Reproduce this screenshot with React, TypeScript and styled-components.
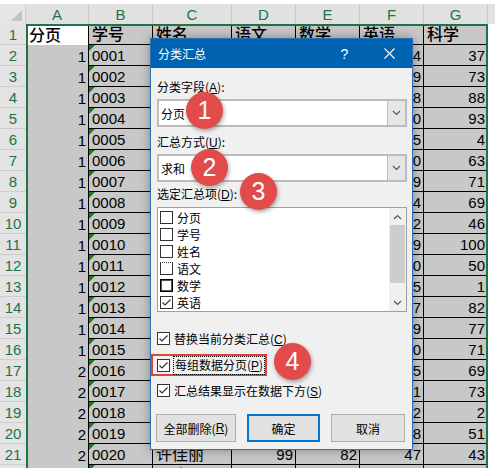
import React from 'react';
import styled, { createGlobalStyle } from 'styled-components';

const GlobalStyle = createGlobalStyle`
    html, body {
        margin: 0;
        padding: 0;
        background: #fff;
    }
    body {
        width: 495px;
        height: 468px;
        overflow: hidden;
        font-family: "Liberation Sans", "Noto Sans CJK SC", sans-serif;
    }
`;

const Page = styled.div`
    position: relative;
    width: 495px;
    height: 468px;
    padding-top: 4px;
    box-sizing: border-box;
    overflow: hidden;
    background: #fff;
`;

const Sheet = styled.div`
    position: relative;
    display: grid;
    grid-template-columns: 26px 63px 64px 79px 64px 64px 64px 64px 1fr;
    grid-template-rows: 20px repeat(22, 21px);
`;

const Corner = styled.div`
    position: relative;
    background: #e6e6e6;
    border-right: 1px solid #cfcfcf;

    &::after {
        content: '';
        position: absolute;
        right: 3px;
        bottom: 3px;
        border-left: 11px solid transparent;
        border-bottom: 11px solid #c4c4c4;
    }
`;

const ColHead = styled.div`
    display: flex;
    align-items: center;
    justify-content: center;
    background: #e1e1e1;
    border-right: 1px solid #c9c9c9;
    box-sizing: border-box;
    color: #217346;
    font-size: 15px;
`;

const RowHead = styled.div`
    display: flex;
    align-items: flex-end;
    justify-content: center;
    padding-bottom: 1px;
    background: #e3e3e3;
    border-bottom: 1px solid #cdcdcd;
    box-sizing: border-box;
    color: #217346;
    font-size: 15px;
`;

const Cell = styled.div<{ $white?: boolean; $lined?: boolean; $right?: boolean; $flag?: boolean; $cjk?: boolean; $head?: boolean }>`
    position: relative;
    display: flex;
    align-items: flex-end;
    justify-content: ${p => (p.$right ? 'flex-end' : 'flex-start')};
    padding: 0 2px 1px 3px;
    box-sizing: border-box;
    overflow: hidden;
    white-space: nowrap;
    background: ${p => (p.$white ? '#fff' : '#c8c8c8')};
    border-right: 1px solid #000;
    border-bottom: ${p => (p.$lined ? '1px solid #000' : 'none')};
    color: #000;
    font-family: ${p => (p.$cjk ? '"Noto Sans CJK SC", sans-serif' : '"Liberation Sans", sans-serif')};
    font-size: ${p => (p.$cjk ? '16px' : '15px')};
    font-weight: ${p => (p.$head ? 500 : 400)};
    line-height: ${p => (p.$cjk ? '20px' : '17px')};

    &::before {
        content: '';
        display: ${p => (p.$flag ? 'block' : 'none')};
        position: absolute;
        left: 0;
        top: 0;
        border-top: 6px solid #1b7a1b;
        border-right: 6px solid transparent;
    }
`;

const Filler = styled.div<{ $head?: boolean }>`
    background: ${p => (p.$head ? '#e1e1e1' : '#fff')};
`;

/* selection outline drawn over the selected cells */
const Selection = styled.div`
    position: absolute;
    left: 26px;
    top: 20px;
    width: 462px;
    bottom: 0;
    box-sizing: border-box;
    border: 2px solid #217346;
    border-bottom: none;
    pointer-events: none;
`;

const Dialog = styled.div`
    position: absolute;
    left: 150px;
    top: 38px;
    width: 263px;
    box-sizing: border-box;
    background: #f0f0f0;
    border: 1px solid #2a70b6;
    box-shadow: 0 0 10px rgba(0, 0, 0, 0.35);
    font-family: "Noto Sans CJK SC", "Liberation Sans", sans-serif;
    font-size: 12px;
    color: #000;
`;

const TitleBar = styled.div`
    display: flex;
    align-items: center;
    height: 29px;
    padding-left: 7px;
    background: #0063b1;
    color: #fff;
`;

const TitleText = styled.span`
    flex: 1;
    font-size: 12px;
`;

const TitleButton = styled.div`
    display: flex;
    align-items: center;
    justify-content: center;
    width: 45px;
    height: 29px;
    color: #fff;
    font-family: "Liberation Sans", sans-serif;
    font-size: 14px;
`;

const Body = styled.div`
    display: flex;
    flex-direction: column;
    padding: 11px 5px 7px 6px;
`;

const Label = styled.div<{ $gap?: number }>`
    height: 16px;
    line-height: 16px;
    margin-top: ${p => p.$gap ?? 0}px;
    margin-bottom: 4px;
`;

const Key = styled.span`
    text-decoration: underline;
    font-family: "Liberation Sans", sans-serif;
`;

const Select = styled.div`
    display: flex;
    height: 28px;
    box-sizing: border-box;
    background: #fff;
    border: 2px solid #bcbcbc;
`;

const SelectValue = styled.div`
    flex: 1;
    display: flex;
    align-items: center;
    padding-left: 2px;
`;

const SelectArrow = styled.div`
    display: flex;
    align-items: center;
    justify-content: center;
    width: 17px;
    background: #e6e6e6;
    border-left: 1px solid #bcbcbc;
`;

const List = styled.div`
    display: flex;
    height: 105px;
    margin-top: 1px;
    box-sizing: border-box;
    background: #fff;
    border: 1px solid #a0a0a0;
`;

const Items = styled.div`
    flex: 1;
    display: flex;
    flex-direction: column;
    padding: 1px 0 0 2px;
`;

const Item = styled.div`
    display: flex;
    align-items: center;
    gap: 4px;
    height: 17px;
    line-height: 17px;
`;

const Box = styled.span<{ $focus?: boolean; $strong?: boolean }>`
    display: inline-flex;
    align-items: center;
    justify-content: center;
    width: 13px;
    height: 13px;
    box-sizing: border-box;
    background: #fff;
    border: 1px solid ${p => (p.$strong ? '#000' : '#333')};
    box-shadow: ${p => (p.$strong ? 'inset 0 0 0 1px #555' : 'none')};
    border-top-style: ${p => (p.$focus ? 'dotted' : 'solid')};
    flex-shrink: 0;
`;

const Scrollbar = styled.div`
    display: flex;
    flex-direction: column;
    align-items: center;
    width: 17px;
    background: #f0f0f0;
`;

const ScrollArrow = styled.div`
    display: flex;
    align-items: center;
    justify-content: center;
    height: 17px;
    width: 17px;
`;

const Thumb = styled.div`
    width: 15px;
    height: 58px;
    background: #cdcdcd;
`;

const ScrollTrack = styled.div`
    flex: 1;
`;

const Options = styled.div`
    display: flex;
    flex-direction: column;
    gap: 6px;
    margin-top: 16px;
`;

const Option = styled.div<{ $marked?: boolean }>`
    display: flex;
    align-items: center;
    gap: 4px;
    height: ${p => (p.$marked ? '22px' : '20px')};
    box-sizing: border-box;
    align-self: flex-start;
    ${p =>
        p.$marked
            ? `
        margin: 0 0 -2px -6px;
        padding: 0 1px 0 4px;
        border: 2px solid #e0423a;
    `
            : ''}
`;

const Focus = styled.span`
    padding: 0 1px;
    line-height: 16px;
    outline: 1px dotted #000;
`;

const Buttons = styled.div`
    display: flex;
    gap: 11px;
    margin: 14px 0 0 -1px;
`;

const Button = styled.div<{ $w: number; $primary?: boolean }>`
    display: flex;
    align-items: center;
    justify-content: center;
    width: ${p => p.$w}px;
    height: 28px;
    box-sizing: border-box;
    background: #e1e1e1;
    border: ${p => (p.$primary ? '2px solid #0078d7' : '1px solid #adadad')};
`;

const Badge = styled.div<{ $x: number; $y: number }>`
    position: absolute;
    left: ${p => p.$x}px;
    top: ${p => p.$y}px;
    display: flex;
    align-items: center;
    justify-content: center;
    width: 37px;
    height: 37px;
    border-radius: 50%;
    background: #e34a4a;
    box-shadow: 1px 2px 4px rgba(0, 0, 0, 0.35);
    color: #fff;
    font-family: "Liberation Sans", sans-serif;
    font-size: 25px;
`;

const Chevron = ({ up }: { up?: boolean }) => (
    <svg width="9" height="6" viewBox="0 0 9 6">
        <polyline
            points={up ? '1,5 4.5,1.5 8,5' : '1,1 4.5,4.5 8,1'}
            fill="none"
            stroke="#555"
            strokeWidth="1.2"
        />
    </svg>
);

const Check = () => (
    <svg width="11" height="11" viewBox="0 0 11 11">
        <polyline points="1.5,5.5 4,8 9.5,2.5" fill="none" stroke="#333" strokeWidth="1.2" />
    </svg>
);

const columns = ['A', 'B', 'C', 'D', 'E', 'F', 'G'];
const heads = ['学号', '姓名', '语文', '数学', '英语', '科学'];
const names = [
    '王子涵', '李明', '张欣怡', '刘洋', '陈晨', '杨帆', '赵磊', '黄婷', '周杰', '吴静',
    '徐浩', '孙悦', '马超', '朱琳', '胡斌', '郭敏', '何强', '高雪', '林峰', '许佳丽',
];
const chinese = [78, 65, 92, 56, 81, 70, 88, 67, 95, 74, 60, 83, 77, 90, 69, 85, 72, 66, 58, 99];
const maths = [88, 71, 64, 93, 57, 80, 75, 62, 84, 91, 68, 79, 86, 73, 94, 61, 82, 70, 87, 82];
const english = [64, 79, 58, 90, 55, 70, 89, 94, 72, 69, 60, 75, 87, 79, 80, 85, 91, 62, 98, 47];
const science = [37, 73, 88, 93, 4, 63, 71, 69, 46, 100, 50, 1, 82, 77, 71, 69, 73, 2, 51, 43];
const fields = ['分页', '学号', '姓名', '语文', '数学', '英语'];

export default function App()
{
    return (
        <Page>
            <GlobalStyle />
            <Sheet>
                <Corner />
                {columns.map(c => (
                    <ColHead key={c}>{c}</ColHead>
                ))}
                <Filler $head />

                <RowHead>1</RowHead>
                <Cell $white $cjk $head>分页</Cell>
                {heads.map(h => (
                    <Cell key={h} $lined $cjk $head>{h}</Cell>
                ))}
                <Filler />

                {science.map((g, i) => (
                    <React.Fragment key={i}>
                        <RowHead>{i + 2}</RowHead>
                        <Cell $right>{i < 15 ? 1 : 2}</Cell>
                        <Cell $lined $flag>{String(i + 1).padStart(4, '0')}</Cell>
                        <Cell $lined $cjk>{names[i]}</Cell>
                        <Cell $lined $right>{chinese[i]}</Cell>
                        <Cell $lined $right>{maths[i]}</Cell>
                        <Cell $lined $right>{english[i]}</Cell>
                        <Cell $lined $right>{g}</Cell>
                        <Filler />
                    </React.Fragment>
                ))}

                <RowHead>22</RowHead>
                <Cell $right>2</Cell>
                <Cell $lined $flag>0021</Cell>
                <Cell $lined $cjk>罗晓</Cell>
                <Cell $lined $right>80</Cell>
                <Cell $lined $right>76</Cell>
                <Cell $lined $right>68</Cell>
                <Cell $lined $right>59</Cell>
                <Filler />

                <Selection />
            </Sheet>

            <Dialog>
                <TitleBar>
                    <TitleText>分类汇总</TitleText>
                    <TitleButton>?</TitleButton>
                    <TitleButton>
                        <svg width="11" height="11" viewBox="0 0 11 11">
                            <path d="M0.5 0.5 L10.5 10.5 M10.5 0.5 L0.5 10.5" stroke="#fff" strokeWidth="1.1" />
                        </svg>
                    </TitleButton>
                </TitleBar>
                <Body>
                    <Label>分类字段(<Key>A</Key>):</Label>
                    <Select>
                        <SelectValue>分页</SelectValue>
                        <SelectArrow><Chevron /></SelectArrow>
                    </Select>

                    <Label $gap={7}>汇总方式(<Key>U</Key>):</Label>
                    <Select>
                        <SelectValue>求和</SelectValue>
                        <SelectArrow><Chevron /></SelectArrow>
                    </Select>

                    <Label $gap={4}>选定汇总项(<Key>D</Key>):</Label>
                    <List>
                        <Items>
                            {fields.map((f, i) => (
                                <Item key={f}>
                                    <Box $focus={i === 3} $strong={i === 4}>
                                        {i === 5 && <Check />}
                                    </Box>
                                    {f}
                                </Item>
                            ))}
                        </Items>
                        <Scrollbar>
                            <ScrollArrow><Chevron up /></ScrollArrow>
                            <Thumb />
                            <ScrollTrack />
                            <ScrollArrow><Chevron /></ScrollArrow>
                        </Scrollbar>
                    </List>

                    <Options>
                        <Option>
                            <Box><Check /></Box>
                            <span>替换当前分类汇总(<Key>C</Key>)</span>
                        </Option>
                        <Option $marked>
                            <Box><Check /></Box>
                            <Focus>每组数据分页(<Key>P</Key>)</Focus>
                        </Option>
                        <Option>
                            <Box><Check /></Box>
                            <span>汇总结果显示在数据下方(<Key>S</Key>)</span>
                        </Option>
                    </Options>

                    <Buttons>
                        <Button $w={80}>全部删除(<Key>R</Key>)</Button>
                        <Button $w={73} $primary>确定</Button>
                        <Button $w={74}>取消</Button>
                    </Buttons>
                </Body>

                <Badge $x={35} $y={53}>1</Badge>
                <Badge $x={40} $y={110}>2</Badge>
                <Badge $x={89} $y={134}>3</Badge>
                <Badge $x={123} $y={304}>4</Badge>
            </Dialog>
        </Page>
    );
}
